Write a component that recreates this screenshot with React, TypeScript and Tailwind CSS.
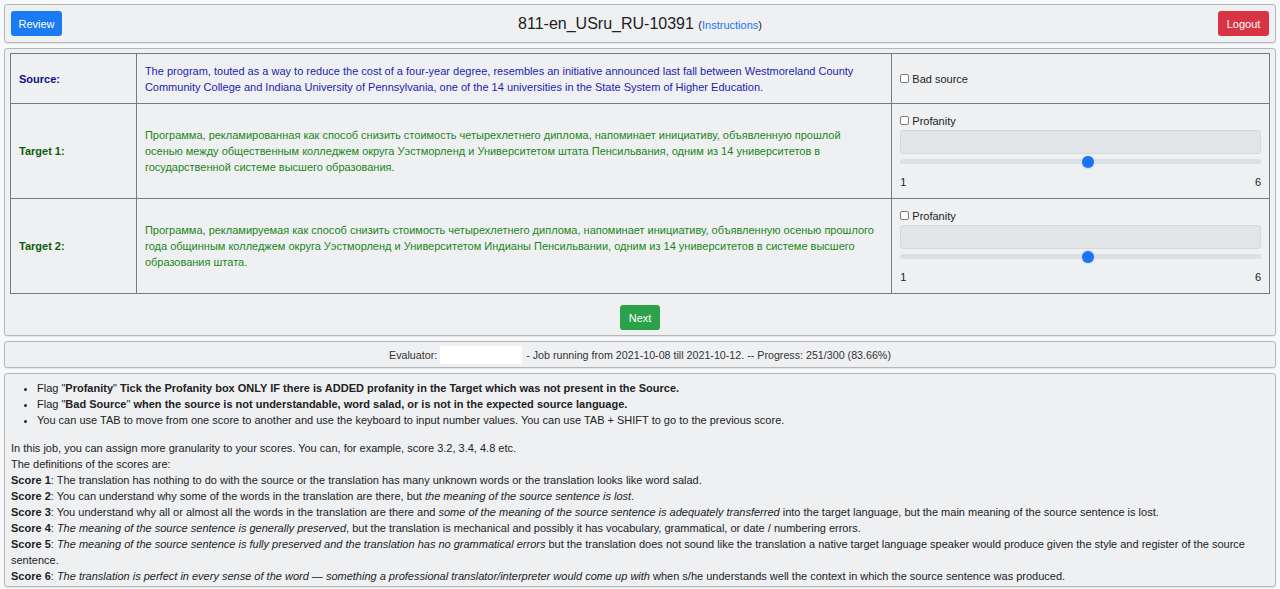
import React from "react";

type Row = {
  label: string;
  text: string;
  kind: "source" | "target";
};

const rows: Row[] = [
  {
    label: "Source:",
    kind: "source",
    text: "The program, touted as a way to reduce the cost of a four-year degree, resembles an initiative announced last fall between Westmoreland County Community College and Indiana University of Pennsylvania, one of the 14 universities in the State System of Higher Education.",
  },
  {
    label: "Target 1:",
    kind: "target",
    text: "Программа, рекламированная как способ снизить стоимость четырехлетнего диплома, напоминает инициативу, объявленную прошлой осенью между общественным колледжем округа Уэстморленд и Университетом штата Пенсильвания, одним из 14 университетов в государственной системе высшего образования.",
  },
  {
    label: "Target 2:",
    kind: "target",
    text: "Программа, рекламируемая как способ снизить стоимость четырехлетнего диплома, напоминает инициативу, объявленную осенью прошлого года общинным колледжем округа Уэстморленд и Университетом Индианы Пенсильвании, одним из 14 университетов в системе высшего образования штата.",
  },
];

const Checkbox = ({ label }: { label: string }) => (
  <label className="flex items-center gap-[3px] h-4 text-[#222]">
    <input
      type="checkbox"
      className="appearance-none w-[9px] h-[9px] border border-[#7a7a7a] rounded-[2px] bg-white"
    />
    <span>{label}</span>
  </label>
);

const Score = () => (
  <div className="flex flex-col">
    <Checkbox label="Profanity" />
    <div className="mt-px h-6 rounded-[3px] border border-[#d6d9dc] bg-[#e2e5e8]" />
    <div className="relative h-4 flex items-center">
      <div className="h-[5px] w-full rounded-full bg-[#dde0e3]" />
      <div className="absolute left-[calc(52%-6px)] top-[2px] w-3 h-3 rounded-full bg-[#1a73f0] ring-1 ring-[#c9dcf8]" />
    </div>
    <div className="mt-1 flex justify-between h-4 leading-4 text-[#222]">
      <span>1</span>
      <span>6</span>
    </div>
  </div>
);

export default function App() {
  return (
    <div
      className="min-h-screen bg-[#f7f8f9] p-1 flex flex-col gap-[5px] text-[11px] leading-4 text-[#222]"
      style={{ fontFamily: '"Liberation Sans", Arial, sans-serif' }}
    >
      <header className="flex items-center justify-between rounded-[3px] border border-[#b4b6b9] bg-[#eff0f2] px-[6px] h-[39px] shadow-[0_1px_1px_rgba(0,0,0,0.08)]">
        <button className="h-[25px] w-[51px] rounded-[3px] bg-[#1a7bf2] text-white">
          Review
        </button>
        <h1 className="text-[16px] leading-5 pt-[2px] text-[#222]">
          811-en_USru_RU-10391{" "}
          <span className="text-[11px]">
            (<a className="text-[#1a73f0]">Instructions</a>)
          </span>
        </h1>
        <button className="h-[25px] w-[51px] rounded-[3px] bg-[#d83443] text-white">
          Logout
        </button>
      </header>

      <section className="rounded-[3px] border border-[#b4b6b9] bg-[#eff0f2] px-[5px] pt-1 pb-[5px] flex flex-col items-center shadow-[0_1px_1px_rgba(0,0,0,0.08)]">
        <table className="w-full table-fixed border-collapse">
          <tbody>
            {rows.map((r) => (
              <tr key={r.label}>
                <td
                  className={`w-[10%] border border-[#77797c] px-2 py-[8.5px] font-bold ${
                    r.kind === "source" ? "text-[#101085]" : "text-[#0c5e0c]"
                  }`}
                >
                  {r.label}
                </td>
                <td
                  className={`w-[60%] border border-[#77797c] py-[8.5px] ${
                    r.kind === "source"
                      ? "px-2 text-[#1d1db0]"
                      : "pl-2 pr-[14px] text-[#1a861a]"
                  }`}
                >
                  {r.text}
                </td>
                <td className="w-[30%] border border-[#77797c] px-2 py-[8.5px] align-middle">
                  {r.kind === "source" ? <Checkbox label="Bad source" /> : <Score />}
                </td>
              </tr>
            ))}
          </tbody>
        </table>
        <button className="mt-[11px] h-[25px] w-10 rounded-[3px] bg-[#2ba24a] text-white">
          Next
        </button>
      </section>

      <div className="flex items-center justify-center rounded-[3px] border border-[#b4b6b9] bg-[#eff0f2] h-[27px] text-[10.7px] text-[#333] shadow-[0_1px_1px_rgba(0,0,0,0.08)]">
        <span>Evaluator:</span>
        <span className="ml-[3px] mr-1 inline-block h-[18px] w-[82px] bg-white" />
        <span>
          - Job running from 2021-10-08 till 2021-10-12. -- Progress: 251/300 (83.66%)
        </span>
      </div>

      <section className="rounded-[3px] border border-[#b4b6b9] bg-[#eff0f2] px-[6px] pt-[6px] pb-[2px] text-[#222] shadow-[0_1px_1px_rgba(0,0,0,0.08)]">
        <ul className="list-disc pl-[26px]">
          <li>
            Flag "<b>Profanity</b>"{" "}
            <b>
              Tick the Profanity box ONLY IF there is ADDED profanity in the Target which was not present in the Source.
            </b>
          </li>
          <li>
            Flag "<b>Bad Source</b>"{" "}
            <b>
              when the source is not understandable, word salad, or is not in the expected source language.
            </b>
          </li>
          <li>
            You can use TAB to move from one score to another and use the keyboard to input number values. You can use TAB + SHIFT to go to the previous score.
          </li>
        </ul>
        <div className="mt-3">
          <p>
            In this job, you can assign more granularity to your scores. You can, for example, score 3.2, 3.4, 4.8 etc.
          </p>
          <p>The definitions of the scores are:</p>
          <p>
            <b>Score 1</b>: The translation has nothing to do with the source or the translation has many unknown words or the translation looks like word salad.
          </p>
          <p>
            <b>Score 2</b>: You can understand why some of the words in the translation are there, but{" "}
            <i>the meaning of the source sentence is lost</i>.
          </p>
          <p>
            <b>Score 3</b>: You understand why all or almost all the words in the translation are there and{" "}
            <i>some of the meaning of the source sentence is adequately transferred</i> into the target language, but the main meaning of the source sentence is lost.
          </p>
          <p>
            <b>Score 4</b>: <i>The meaning of the source sentence is generally preserved</i>, but the translation is mechanical and possibly it has vocabulary, grammatical, or date / numbering errors.
          </p>
          <p>
            <b>Score 5</b>:{" "}
            <i>The meaning of the source sentence is fully preserved and the translation has no grammatical errors</i>{" "}
            but the translation does not sound like the translation a native target language speaker would produce given the style and register of the source sentence.
          </p>
          <p>
            <b>Score 6</b>:{" "}
            <i>The translation is perfect in every sense of the word — something a professional translator/interpreter would come up with</i>{" "}
            when s/he understands well the context in which the source sentence was produced.
          </p>
        </div>
      </section>
    </div>
  );
}
